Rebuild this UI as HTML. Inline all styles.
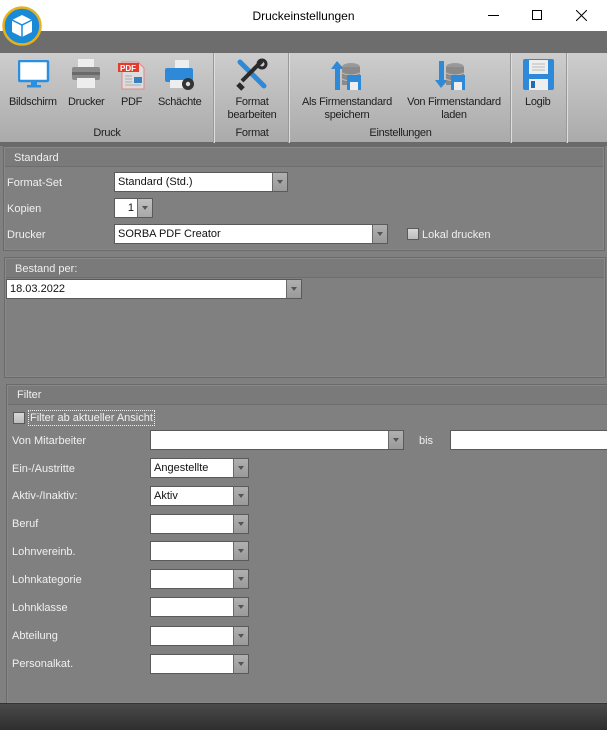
<!DOCTYPE html>
<html><head><meta charset="utf-8"><style>
*{margin:0;padding:0;box-sizing:border-box}
body{width:607px;height:730px;overflow:hidden;background:#808080;font-family:"Liberation Sans",sans-serif;font-size:11px;position:relative}
.a{position:absolute}
.t{position:absolute;color:#f0f0f0;white-space:nowrap;line-height:14px}
.rt{position:absolute;color:#1e1e1e;text-align:center;line-height:13px;white-space:nowrap;letter-spacing:-0.3px}
.cb{position:absolute;background:#fff;border:1px solid #5a5a5a;height:20px;color:#111;line-height:18px;padding-left:3px}
.cb .b{position:absolute;right:0;top:0;width:15px;height:18px;background:linear-gradient(#b0b0b0,#9a9a9a);border-left:1px solid #6a6a6a}
.cb .b:after{content:"";position:absolute;left:4px;top:7px;border-left:3.5px solid transparent;border-right:3.5px solid transparent;border-top:4px solid #555}
.pn{position:absolute;border:1px solid #6a6a6a;box-shadow:inset 0 0 0 1px #888}
.ph{position:absolute;left:1px;right:1px;top:1px;height:19px;background:#7a7a7a;border-bottom:1px solid #6e6e6e}
.chk{position:absolute;width:12px;height:12px;border:1px solid #5a5a5a;background:linear-gradient(#d8d8d8,#bcbcbc)}
.sep{position:absolute;top:53px;width:2px;height:90px;border-left:1px solid #999;border-right:1px solid #ddd}
</style></head><body>
<div class="a" style="left:0;top:0;width:607px;height:31px;background:#fff"></div>
<div class="a" style="left:0;top:9px;width:607px;text-align:center;font-size:12px;color:#000">Druckeinstellungen</div>
<div class="a" style="left:488px;top:15px;width:11px;height:1px;background:#000"></div>
<div class="a" style="left:532px;top:10px;width:10px;height:10px;border:1px solid #000"></div>
<svg class="a" style="left:576px;top:10px" width="11" height="11"><path d="M0 0L11 11M11 0L0 11" stroke="#000" stroke-width="1"/></svg>
<div class="a" style="left:0;top:31px;width:607px;height:22px;background:#6d6d6d"></div>
<svg class="a" style="left:2px;top:6px" width="40" height="40" viewBox="0 0 40 40">
<circle cx="20" cy="20" r="18.5" fill="#1a8ad6" stroke="#e6b21c" stroke-width="2.5"/>
<path d="M20 9L30 14L30 26L20 31L10 26L10 14Z" fill="#fff"/>
<path d="M10 14L20 19L30 14M20 19L20 31" stroke="#1a8ad6" stroke-width="1.5" fill="none"/>
</svg>
<div class="a" style="left:0;top:53px;width:607px;height:90px;background:linear-gradient(#cdcdcd,#aaaaaa)"></div>
<div class="a" style="left:0;top:142px;width:607px;height:4px;background:#6a6a6a"></div>
<div class="sep" style="left:213px"></div><div class="sep" style="left:288px"></div><div class="sep" style="left:510px"></div><div class="sep" style="left:566px"></div>
<svg class="a" style="left:18px;top:60px" width="32" height="30"><rect x="1" y="1" width="29" height="20" rx="1" fill="#fff" stroke="#2a8fe0" stroke-width="2.5"/><rect x="13" y="22" width="6" height="3" fill="#2a8fe0"/><rect x="9" y="25" width="14" height="2.5" fill="#2a8fe0"/></svg>
<svg class="a" style="left:70px;top:58px" width="32" height="32"><rect x="8" y="1" width="16" height="8" fill="#eee"/><rect x="2" y="9" width="28" height="13" rx="2" fill="#8a8a8a"/><rect x="2" y="14" width="28" height="3" fill="#6a6a6a"/><rect x="7" y="20" width="18" height="10" fill="#eee"/></svg>
<svg class="a" style="left:117px;top:58px" width="30" height="32"><path d="M5 4H21L27 10V31H5Z" fill="#ddd" stroke="#d88" stroke-width="1"/><rect x="1" y="5" width="21" height="9" fill="#e53b2c"/><text x="3" y="13" font-size="8" font-weight="bold" fill="#fff" font-family="Liberation Sans">PDF</text><rect x="17" y="19" width="8" height="6" fill="#3a7fc0"/><path d="M8 18H15M8 21H15M8 24H15M8 27H24" stroke="#aaa"/></svg>
<svg class="a" style="left:163px;top:58px" width="34" height="34"><rect x="12" y="2" width="14" height="8" fill="#eee"/><rect x="2" y="10" width="28" height="14" rx="2" fill="#2e8ad8"/><rect x="7" y="22" width="16" height="8" fill="#eee"/><circle cx="25" cy="26" r="6" fill="#333"/><circle cx="25" cy="26" r="2.2" fill="#ddd"/></svg>
<svg class="a" style="left:234px;top:58px" width="34" height="34"><path d="M6 4L30 28" stroke="#2e8ad8" stroke-width="5" stroke-linecap="round"/><path d="M28 3L8 23" stroke="#2a2a2a" stroke-width="4"/><path d="M4 26L9 31" stroke="#2a2a2a" stroke-width="5"/><circle cx="28" cy="6" r="4" fill="none" stroke="#2a2a2a" stroke-width="3"/></svg>
<svg class="a" style="left:330px;top:60px" width="34" height="32"><path d="M7 1L1 9H5V30H10V9H14Z" fill="#2e8ad8"/><ellipse cx="21" cy="7" rx="9" ry="4" fill="#999"/><rect x="12" y="7" width="18" height="18" fill="#8a8a8a"/><path d="M12 13Q21 17 30 13M12 19Q21 23 30 19" stroke="#bbb" fill="none"/><rect x="17" y="15" width="14" height="15" fill="#2e8ad8"/><rect x="20" y="22" width="8" height="8" fill="#eee"/></svg>
<svg class="a" style="left:434px;top:60px" width="34" height="32"><path d="M5 1H10V20H14L7 28L1 20H5Z" fill="#2e8ad8"/><ellipse cx="21" cy="7" rx="9" ry="4" fill="#999"/><rect x="12" y="7" width="18" height="18" fill="#8a8a8a"/><path d="M12 13Q21 17 30 13M12 19Q21 23 30 19" stroke="#bbb" fill="none"/><rect x="17" y="15" width="14" height="15" fill="#2e8ad8"/><rect x="20" y="22" width="8" height="8" fill="#eee"/></svg>
<svg class="a" style="left:523px;top:59px" width="32" height="32"><rect x="0" y="0" width="31" height="31" rx="2" fill="#2e8ad8"/><rect x="6" y="1" width="19" height="14" fill="#eee"/><path d="M9 5H22M9 8H22M9 11H22" stroke="#bbb"/><rect x="6" y="20" width="19" height="11" fill="#eee"/><rect x="8" y="22" width="4" height="7" fill="#1f6cb0"/></svg>
<div class="rt" style="left:9px;top:96px">Bildschirm</div>
<div class="rt" style="left:68px;top:96px">Drucker</div>
<div class="rt" style="left:121px;top:96px">PDF</div>
<div class="rt" style="left:158px;top:96px">Schächte</div>
<div class="rt" style="left:215px;top:96px;width:74px">Format<br>bearbeiten</div>
<div class="rt" style="left:295px;top:96px;width:104px">Als Firmenstandard<br>speichern</div>
<div class="rt" style="left:401px;top:96px;width:106px">Von Firmenstandard<br>laden</div>
<div class="rt" style="left:525px;top:96px">Logib</div>
<div class="rt" style="left:0;top:127px;width:214px">Druck</div>
<div class="rt" style="left:215px;top:127px;width:74px">Format</div>
<div class="rt" style="left:290px;top:127px;width:221px">Einstellungen</div>
<div class="pn" style="left:3px;top:146px;width:602px;height:105px"><div class="ph"></div></div>
<div class="t" style="left:14px;top:151px">Standard</div>
<div class="t" style="left:7px;top:176px">Format-Set</div>
<div class="cb" style="left:114px;top:172px;width:174px">Standard (Std.)<div class="b"></div></div>
<div class="t" style="left:7px;top:202px">Kopien</div>
<div class="cb" style="left:114px;top:198px;width:39px;text-align:right;padding-right:18px">1<div class="b" style="background:linear-gradient(#c0c0c0,#a8a8a8)"></div></div>
<div class="t" style="left:7px;top:228px">Drucker</div>
<div class="cb" style="left:114px;top:224px;width:274px">SORBA PDF Creator<div class="b"></div></div>
<div class="chk" style="left:407px;top:228px"></div>
<div class="t" style="left:422px;top:228px">Lokal drucken</div>
<div class="pn" style="left:4px;top:257px;width:602px;height:121px"><div class="ph"></div></div>
<div class="t" style="left:15px;top:262px">Bestand per:</div>
<div class="cb" style="left:6px;top:279px;width:296px">18.03.2022<div class="b"></div></div>
<div class="pn" style="left:6px;top:384px;width:603px;height:320px"><div class="ph"></div></div>
<div class="t" style="left:17px;top:388px">Filter</div>
<div class="chk" style="left:13px;top:412px"></div>
<div class="t" style="left:28px;top:410px;border:1px dotted #eee;padding:0 1px;line-height:14px">Filter ab aktueller Ansicht</div>
<div class="t" style="left:12px;top:434px">Von Mitarbeiter</div>
<div class="cb" style="left:150px;top:430px;width:254px"><div class="b"></div></div>
<div class="t" style="left:419px;top:434px">bis</div>
<div class="cb" style="left:450px;top:430px;width:160px"></div>
<div class="t" style="left:12px;top:462px">Ein-/Austritte</div><div class="cb" style="left:150px;top:458px;width:99px">Angestellte<div class="b"></div></div>
<div class="t" style="left:12px;top:489px">Aktiv-/Inaktiv:</div><div class="cb" style="left:150px;top:486px;width:99px">Aktiv<div class="b"></div></div>
<div class="t" style="left:12px;top:517px">Beruf</div><div class="cb" style="left:150px;top:514px;width:99px"><div class="b"></div></div>
<div class="t" style="left:12px;top:545px">Lohnvereinb.</div><div class="cb" style="left:150px;top:541px;width:99px"><div class="b"></div></div>
<div class="t" style="left:12px;top:573px">Lohnkategorie</div><div class="cb" style="left:150px;top:569px;width:99px"><div class="b"></div></div>
<div class="t" style="left:12px;top:601px">Lohnklasse</div><div class="cb" style="left:150px;top:597px;width:99px"><div class="b"></div></div>
<div class="t" style="left:12px;top:629px">Abteilung</div><div class="cb" style="left:150px;top:626px;width:99px"><div class="b"></div></div>
<div class="t" style="left:12px;top:657px">Personalkat.</div><div class="cb" style="left:150px;top:654px;width:99px"><div class="b"></div></div>
<div class="a" style="left:0;top:703px;width:607px;height:27px;background:linear-gradient(#4a4a4a,#2e2e2e);border-top:1px solid #333"></div>
</body></html>
